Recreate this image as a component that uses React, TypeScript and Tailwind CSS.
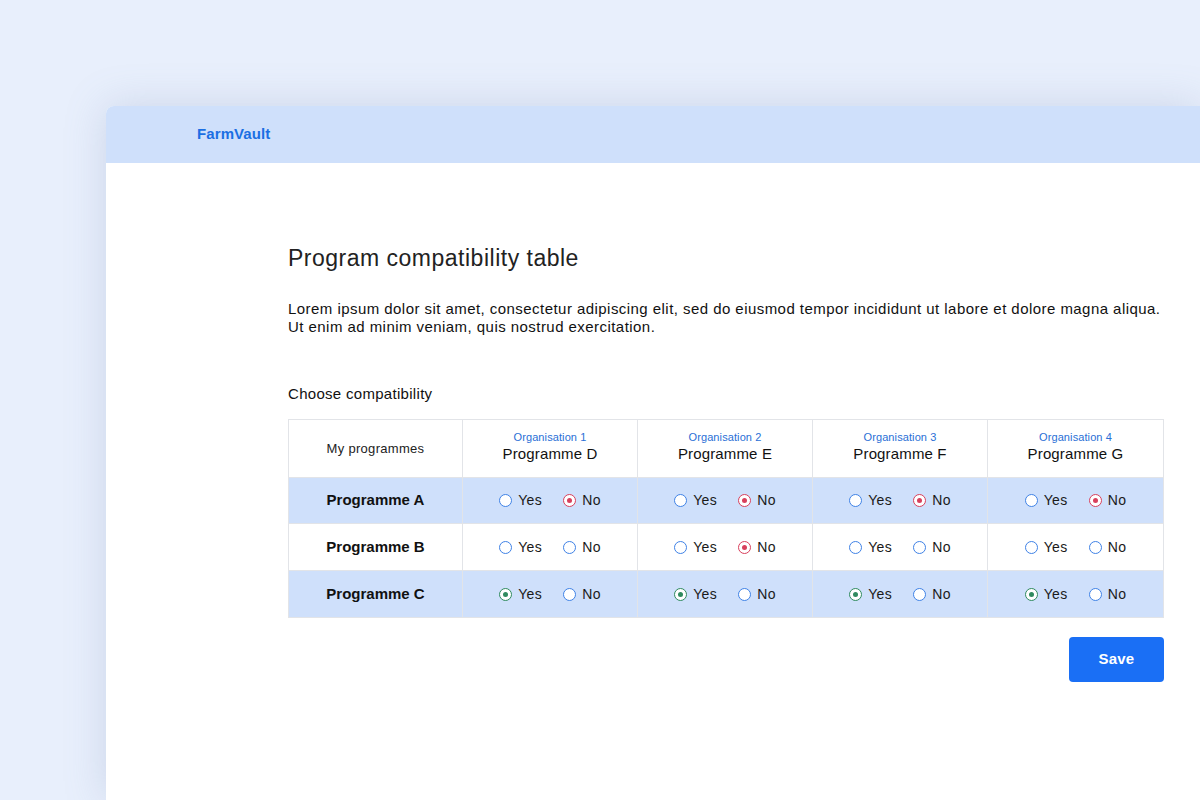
import React from 'react';

type Choice = 'yes' | 'no' | null;

const columns = [
  { org: 'Organisation 1', name: 'Programme D' },
  { org: 'Organisation 2', name: 'Programme E' },
  { org: 'Organisation 3', name: 'Programme F' },
  { org: 'Organisation 4', name: 'Programme G' }
];

const rows: { name: string; shaded: boolean; height: string; values: Choice[] }[] = [
  { name: 'Programme A', shaded: true, height: 'h-[46px]', values: ['no', 'no', 'no', 'no'] },
  { name: 'Programme B', shaded: false, height: 'h-[47px]', values: [null, 'no', null, null] },
  { name: 'Programme C', shaded: true, height: 'h-[47px]', values: ['yes', 'yes', 'yes', 'yes'] }
];

const Radio: React.FC<{ checked: boolean; tone: 'green' | 'red'; label: string }> = ({ checked, tone, label }) => {
  const ring = checked ? (tone === 'green' ? 'border-[#2f8a5e]' : 'border-[#d8405c]') : 'border-[#3f82e6]';
  const dot = tone === 'green' ? 'bg-[#2f8a5e]' : 'bg-[#d8405c]';
  return (
    <span className="flex items-center gap-[6px]">
      <span className={`w-[13px] h-[13px] rounded-full border ${ring} bg-white flex items-center justify-center`}>
        {checked && <span className={`w-[5px] h-[5px] rounded-full ${dot}`} />}
      </span>
      <span className="text-[14px] tracking-[0.4px] text-[#1a1a1a]">{label}</span>
    </span>
  );
};

export default function App() {
  return (
    <div
      className="w-[1200px] h-[800px] overflow-hidden bg-[#e8effc] pt-[106px] pl-[106px]"
      style={{ fontFamily: '"Liberation Sans", Arial, sans-serif' }}
    >
      <div className="w-[1094px] h-[694px] bg-white rounded-tl-[8px] shadow-[0_0_40px_rgba(120,140,180,0.25)] overflow-hidden">
        <div className="h-[57px] bg-[#cfe0fb] flex items-center pl-[91px]">
          <span className="text-[15px] font-bold text-[#1b6fe3] tracking-[0.1px]">FarmVault</span>
        </div>

        <div className="pl-[182px] pt-[81px] w-[1094px]">
          <h1 className="text-[23px] leading-[28px] tracking-[0.5px] text-[#222]">Program compatibility table</h1>

          <p className="mt-[28px] text-[15px] leading-[18px] tracking-[0.45px] text-[#111] whitespace-nowrap">
            Lorem ipsum dolor sit amet, consectetur adipiscing elit, sed do eiusmod tempor incididunt ut labore et dolore magna aliqua.
            <br />
            Ut enim ad minim veniam, quis nostrud exercitation.
          </p>

          <div className="mt-[49px] text-[15px] leading-[18px] tracking-[0.3px] text-[#111]">Choose compatibility</div>

          <div className="mt-[16px] w-[876px] border border-[#e2e4e8] grid grid-cols-[174px_repeat(4,1fr)]">
            <div className="h-[57px] flex items-center justify-center text-[13px] tracking-[0.3px] text-[#222] border-r border-[#e2e4e8]">
              My programmes
            </div>
            {columns.map((c, i) => (
              <div
                key={c.name}
                className={`h-[57px] flex flex-col items-center justify-center pb-[4px] ${i < 3 ? 'border-r border-[#e2e4e8]' : ''}`}
              >
                <span className="text-[11px] leading-[14px] tracking-[0.1px] text-[#2a6fd6]">{c.org}</span>
                <span className="text-[15px] leading-[19px] tracking-[0.15px] font-medium text-[#111]">{c.name}</span>
              </div>
            ))}

            {rows.map((r) => (
              <React.Fragment key={r.name}>
                <div
                  className={`${r.height} flex items-center justify-center text-[15px] font-semibold text-[#111] border-t border-r border-[#e2e4e8] ${r.shaded ? 'bg-[#cfe0fb]' : 'bg-white'}`}
                >
                  {r.name}
                </div>
                {r.values.map((v, i) => (
                  <div
                    key={i}
                    className={`${r.height} flex items-center justify-center gap-[21px] border-t border-[#e2e4e8] ${i < 3 ? 'border-r' : ''} ${r.shaded ? 'bg-[#cfe0fb]' : 'bg-white'}`}
                  >
                    <Radio checked={v === 'yes'} tone="green" label="Yes" />
                    <Radio checked={v === 'no'} tone="red" label="No" />
                  </div>
                ))}
              </React.Fragment>
            ))}
          </div>

          <div className="w-[876px] flex justify-end mt-[19px]">
            <button
              type="button"
              className="w-[95px] h-[45px] rounded-[4px] bg-[#1a6ff5] text-white text-[15px] font-semibold tracking-[0.2px]"
            >
              Save
            </button>
          </div>
        </div>
      </div>
    </div>
  );
}
